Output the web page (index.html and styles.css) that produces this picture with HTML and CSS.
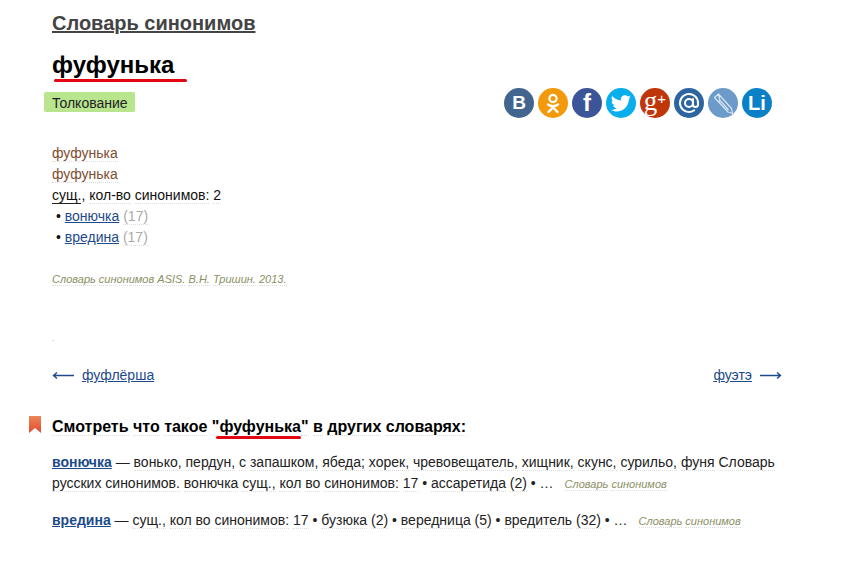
FILE: index.html
```html
<!DOCTYPE html>
<html lang="ru">
<head>
<meta charset="utf-8">
<title>фуфунька</title>
<link rel="stylesheet" href="styles.css">
</head>
<body>
<main class="page">
  <div class="dict-title"><a href="#">Словарь синонимов</a></div>
  <h1 class="word"><span class="red-line">фуфунька</span></h1>
  <div class="toolbar">
    <span class="badge">Толкование</span>
    <div class="share">
      <span class="ico vk">B</span>
      <span class="ico ok"><svg viewBox="0 0 30 30" width="30" height="30"><circle cx="15" cy="10.5" r="3.6" fill="none" stroke="#fff" stroke-width="2.2"/><path d="M10 16.500c3 2 7 2 10 0M15 18.500v1.500M10.500 24l4.500-4.500 4.500 4.500" fill="none" stroke="#fff" stroke-width="2.400" stroke-linecap="round"/></svg></span>
      <span class="ico fb">f</span>
      <span class="ico tw"><svg viewBox="0 0 30 30" width="30" height="30"><path d="M25 9.200c-.8.400-1.600.600-2.400.700.900-.500 1.500-1.300 1.800-2.300-.800.500-1.700.800-2.600 1-1.600-1.700-4.300-1.700-5.900-.100-1 1-1.400 2.500-1.100 3.900-3.400-.200-6.500-1.800-8.600-4.400-1.100 1.900-.600 4.300 1.300 5.500-.700 0-1.300-.200-1.900-.500 0 2 1.400 3.700 3.300 4.100-.600.200-1.200.200-1.900.100.500 1.700 2.100 2.800 3.900 2.900-1.800 1.400-4 2-6.200 1.700 6.400 4.100 16.500 1.200 18.200-9.200.100-.600.100-1.200.100-1.700.800-.600 1.500-1.300 2-2.200z" fill="#fff"/></svg></span>
      <span class="ico gp"><span class="gp-g">g</span><span class="gp-plus">+</span></span>
      <span class="ico mr"><svg viewBox="0 0 30 30" width="30" height="30"><circle cx="15" cy="15" r="4" fill="none" stroke="#fff" stroke-width="2"/><path d="M19 11v5.500a2.500 2.500 0 0 0 5 0v-1.500a9 9 0 1 0-3.800 7.300" fill="none" stroke="#fff" stroke-width="2" stroke-linecap="round"/></svg></span>
      <span class="ico lj"><svg viewBox="0 0 30 30" width="30" height="30"><path d="M6.500 9.500l4-3.500 13 14.500 1 5-4.500-1.500zM9 12.500l2.500 1 1-.500 8 9M10.500 6l1.500 6.500" fill="none" stroke="#d8e5f2" stroke-width="1.200" stroke-linejoin="round"/></svg></span>
      <span class="ico li">Li</span>
    </div>
  </div>

  <section class="entry">
    <div class="line brown"><span class="w">фуфунька</span></div>
    <div class="line brown"><span class="w">фуфунька</span></div>
    <div class="line"><span class="w abbr">сущ.</span>, <span class="w">кол-во</span> <span class="w">синонимов:</span> <span class="w">2</span></div>
    <div class="line syn">• <a href="#">вонючка</a> <span class="w count">(17)</span></div>
    <div class="line syn">• <a href="#">вредина</a> <span class="w count">(17)</span></div>
  </section>

  <p class="source"><span class="w">Словарь</span> <span class="w">синонимов</span> <span class="w">ASIS.</span> <span class="w">В.Н.</span> <span class="w">Тришин.</span> <span class="w">2013.</span></p>

  <div class="dot">.</div>

  <nav class="pager">
    <div class="pager-item"><svg class="arrow" viewBox="0 0 22 9" width="22" height="9"><path d="M22 4.500H1.500M5 1.500L1.500 4.500 5 7.500" fill="none" stroke="#1d4a8a" stroke-width="1.400"/></svg><a href="#">фуфлёрша</a></div>
    <div class="pager-item"><a href="#">фуэтэ</a><svg class="arrow" viewBox="0 0 22 9" width="22" height="9"><path d="M0 4.500H20.500M17 1.500L20.500 4.500 17 7.500" fill="none" stroke="#1d4a8a" stroke-width="1.400"/></svg></div>
  </nav>

  <h2 class="other">
    <svg class="mark" viewBox="0 0 12 17" width="12" height="17"><defs><linearGradient id="mk" x1="0" y1="0" x2="0" y2="1"><stop offset="0" stop-color="#e9885a"/><stop offset="1" stop-color="#e8472a"/></linearGradient></defs><path d="M0 0h12v17l-6-5-6 5z" fill="url(#mk)"/></svg>
    <span><span class="w">Смотреть</span> <span class="w">что</span> <span class="w">такое</span> <span class="w">"</span><span class="red-line small">фуфунька</span><span class="w">"</span> <span class="w">в</span> <span class="w">других</span> <span class="w">словарях:</span></span>
  </h2>

  <p class="result"><a class="term" href="#">вонючка</a> — <span class="w">вонько,</span> <span class="w">пердун,</span> <span class="w">с</span> <span class="w">запашком,</span> <span class="w">ябеда;</span> <span class="w">хорек,</span> <span class="w">чревовещатель,</span> <span class="w">хищник,</span> <span class="w">скунс,</span> <span class="w">сурильо,</span> <span class="w">фуня</span> <span class="w">Словарь</span> <span class="w">русских</span> <span class="w">синонимов.</span> <span class="w">вонючка</span> <span class="w">сущ.,</span> <span class="w">кол</span> <span class="w">во</span> <span class="w">синонимов:</span> <span class="w">17</span> • <span class="w">ассаретида</span> <span class="w">(2)</span> • … <span class="ref"><span class="w">Словарь</span> <span class="w">синонимов</span></span></p>

  <p class="result"><a class="term" href="#">вредина</a> — <span class="w">сущ.,</span> <span class="w">кол</span> <span class="w">во</span> <span class="w">синонимов:</span> <span class="w">17</span> • <span class="w">бузюка</span> <span class="w">(2)</span> • <span class="w">вередница</span> <span class="w">(5)</span> • <span class="w">вредитель</span> <span class="w">(32)</span> • … <span class="ref"><span class="w">Словарь</span> <span class="w">синонимов</span></span></p>
</main>
</body>
</html>
```

FILE: styles.css
```css
html, body {
  margin: 0;
  padding: 0;
  background: #fff;
}

body {
  font-family: "Liberation Sans", Arial, sans-serif;
  font-size: 14px;
  line-height: 21px;
  color: #111;
}

a {
  color: #1d4a8a;
}

.page {
  width: 730px;
  padding: 11px 0 0 52px;
}

.dict-title {
  font-size: 20px;
  font-weight: bold;
  line-height: 24px;
}

.dict-title a {
  color: #444;
}

.word {
  margin: 15px 0 0;
  font-size: 24px;
  line-height: 30px;
  font-weight: bold;
  color: #000;
}

.red-line {
  position: relative;
  display: inline-block;
}

.red-line::after {
  content: "";
  position: absolute;
  left: 2px;
  right: -13px;
  bottom: -2px;
  height: 3px;
  border-radius: 2px;
  background: #e30613;
}

.red-line.small::after {
  left: -3px;
  right: 0;
  bottom: -2px;
}

.toolbar {
  display: flex;
  justify-content: space-between;
  align-items: flex-start;
  margin: 12px 10px 0 -8px;
  height: 32px;
}

.badge {
  background: #b9e58f;
  border-radius: 2px;
  padding: 0 7px 0 8px;
  line-height: 22px;
  height: 20px;
  color: #222;
}

.share {
  display: flex;
  gap: 4px;
  margin-top: -4px;
}

.ico {
  width: 30px;
  height: 30px;
  border-radius: 50%;
  display: flex;
  align-items: center;
  justify-content: center;
  color: #fff;
  font-weight: bold;
  font-size: 19px;
  line-height: 30px;
}

.vk { background: #41658f; }
.ok { background: #f39a0c; }
.fb { background: #3b5598; font-size: 24px; }
.tw { background: #09aeec; }
.gp { background: #c0360b; font-family: "Liberation Serif", serif; font-weight: normal; }
.mr { background: #2c659f; }
.lj { background: #6c9bca; }
.li { background: #0a80c7; font-size: 20px; }

.gp-g { font-size: 27px; margin-top: -5px; }
.gp-plus { font-size: 15px; margin-top: -9px; font-family: "Liberation Sans", sans-serif; }

.entry {
  margin-top: 19px;
}

.line {
  height: 21px;
}

.w {
  border-bottom: 1px dotted #ddd;
}

.brown {
  color: #7d4e2f;
}

.abbr {
  border-bottom: 1px solid #222;
}

.syn {
  padding-left: 4px;
}

.count {
  color: #aaa;
}

.source {
  margin: 21px 0 0;
  font-size: 11px;
  font-style: italic;
  color: #8b8f63;
  line-height: 21px;
}

.dot {
  margin-top: 38px;
  font-size: 8px;
  line-height: 21px;
  color: #777;
}

.pager {
  display: flex;
  justify-content: space-between;
  margin-top: 16px;
}

.pager-item {
  display: flex;
  align-items: center;
  gap: 8px;
}

.arrow {
  flex: none;
  margin-top: -1px;
}

.other {
  display: flex;
  align-items: center;
  gap: 11px;
  margin: 30px 0 0 -23px;
  font-size: 16px;
  line-height: 21px;
  font-weight: bold;
  color: #000;
}

.mark {
  margin-top: -4px;
  flex: none;
}

.result {
  margin: 15px 0 0;
  line-height: 21px;
  color: #222;
}

.result + .result {
  margin-top: 15px;
}

.term {
  font-weight: bold;
}

.ref {
  margin-left: 7px;
  font-size: 11px;
  font-style: italic;
  color: #8b8f63;
}
```
